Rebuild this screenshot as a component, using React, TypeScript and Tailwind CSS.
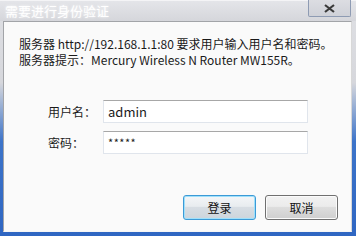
export default function App() {
  return (
    <div
      className="w-[356px] h-[236px] flex flex-col overflow-hidden bg-[linear-gradient(to_bottom,#dfe0e4_0%,#d6d7dc_35%,#3d74c9_60%,#2f66c2_100%)]"
      style={{ fontFamily: '"Noto Sans CJK SC", "Noto Sans", sans-serif' }}
    >
      {/* 标题栏 */}
      <div className="h-[21px] flex items-start justify-between bg-[linear-gradient(to_bottom,#e4e5e9,#d5d6db)] border-t border-[#f4f4f6]">
        <span className="pl-[5px] pt-[1px] text-[13px] leading-[17px] text-white [text-shadow:0_0_3px_rgba(255,255,255,0.9)]">
          需要进行身份验证
        </span>
        <div className="mr-[5px] -mt-px w-[43px] h-[17px] border border-[#8e9bb3] border-t-0 rounded-b-[2px] bg-[linear-gradient(to_bottom,#dcdde2,#cfd1d8)] flex items-center justify-center">
          <svg width="11" height="9" viewBox="0 0 11 9">
            <path d="M1 1 L10 8 M10 1 L1 8" stroke="#3a3a3a" strokeWidth="2.2" />
          </svg>
        </div>
      </div>

      {/* 内容 */}
      <div className="ml-[3px] mr-[4px] h-[211px] bg-[#fafafa] border-t border-l border-[#a2a4a8] border-r border-r-[#d8d8d8] border-b border-b-[#f5f5f5] flex flex-col">
        <div className="pl-[15px] pt-[14px] text-[12px] leading-[16px] text-[#1a1a1a]">
          <div>服务器 http://192.168.1.1:80 要求用户输入用户名和密码。</div>
          <div>服务器提示：Mercury Wireless N Router MW155R。</div>
        </div>

        <div className="mt-[32px] flex flex-col gap-[8px] text-[12px] text-[#1a1a1a]">
          <div className="flex items-center">
            <span className="ml-[44px] w-[55px]">用户名：</span>
            <div className="w-[205px] h-[23px] bg-white border border-[#e0e5ec] border-t-[#a7a7a7] flex items-center pl-[4px] text-[13px]">
              admin
            </div>
          </div>
          <div className="flex items-center">
            <span className="ml-[44px] w-[55px]">密码：</span>
            <div className="w-[205px] h-[23px] bg-white border border-[#e0e5ec] border-t-[#a7a7a7] flex items-center pl-[4px] text-[11px] tracking-[0.5px]">
              *****
            </div>
          </div>
        </div>

        <div className="mt-[41px] flex gap-[9px] pl-[179px]">
          <button className="w-[73px] h-[25px] rounded-[3px] border border-[#3c9ad6] shadow-[inset_0_0_0_1px_#9fe0fb] bg-[linear-gradient(to_bottom,#f4f6f8_0%,#e8ecef_45%,#d7dde3_50%,#cdd5dc_100%)] text-[12px] text-[#111]">
            登录
          </button>
          <button className="w-[73px] h-[25px] rounded-[3px] border border-[#707070] shadow-[inset_0_0_0_1px_#fbfbfb] bg-[linear-gradient(to_bottom,#f2f2f2_0%,#ebebeb_45%,#dddddd_50%,#cfcfcf_100%)] text-[12px] text-[#111]">
            取消
          </button>
        </div>
      </div>
    </div>
  )
}
